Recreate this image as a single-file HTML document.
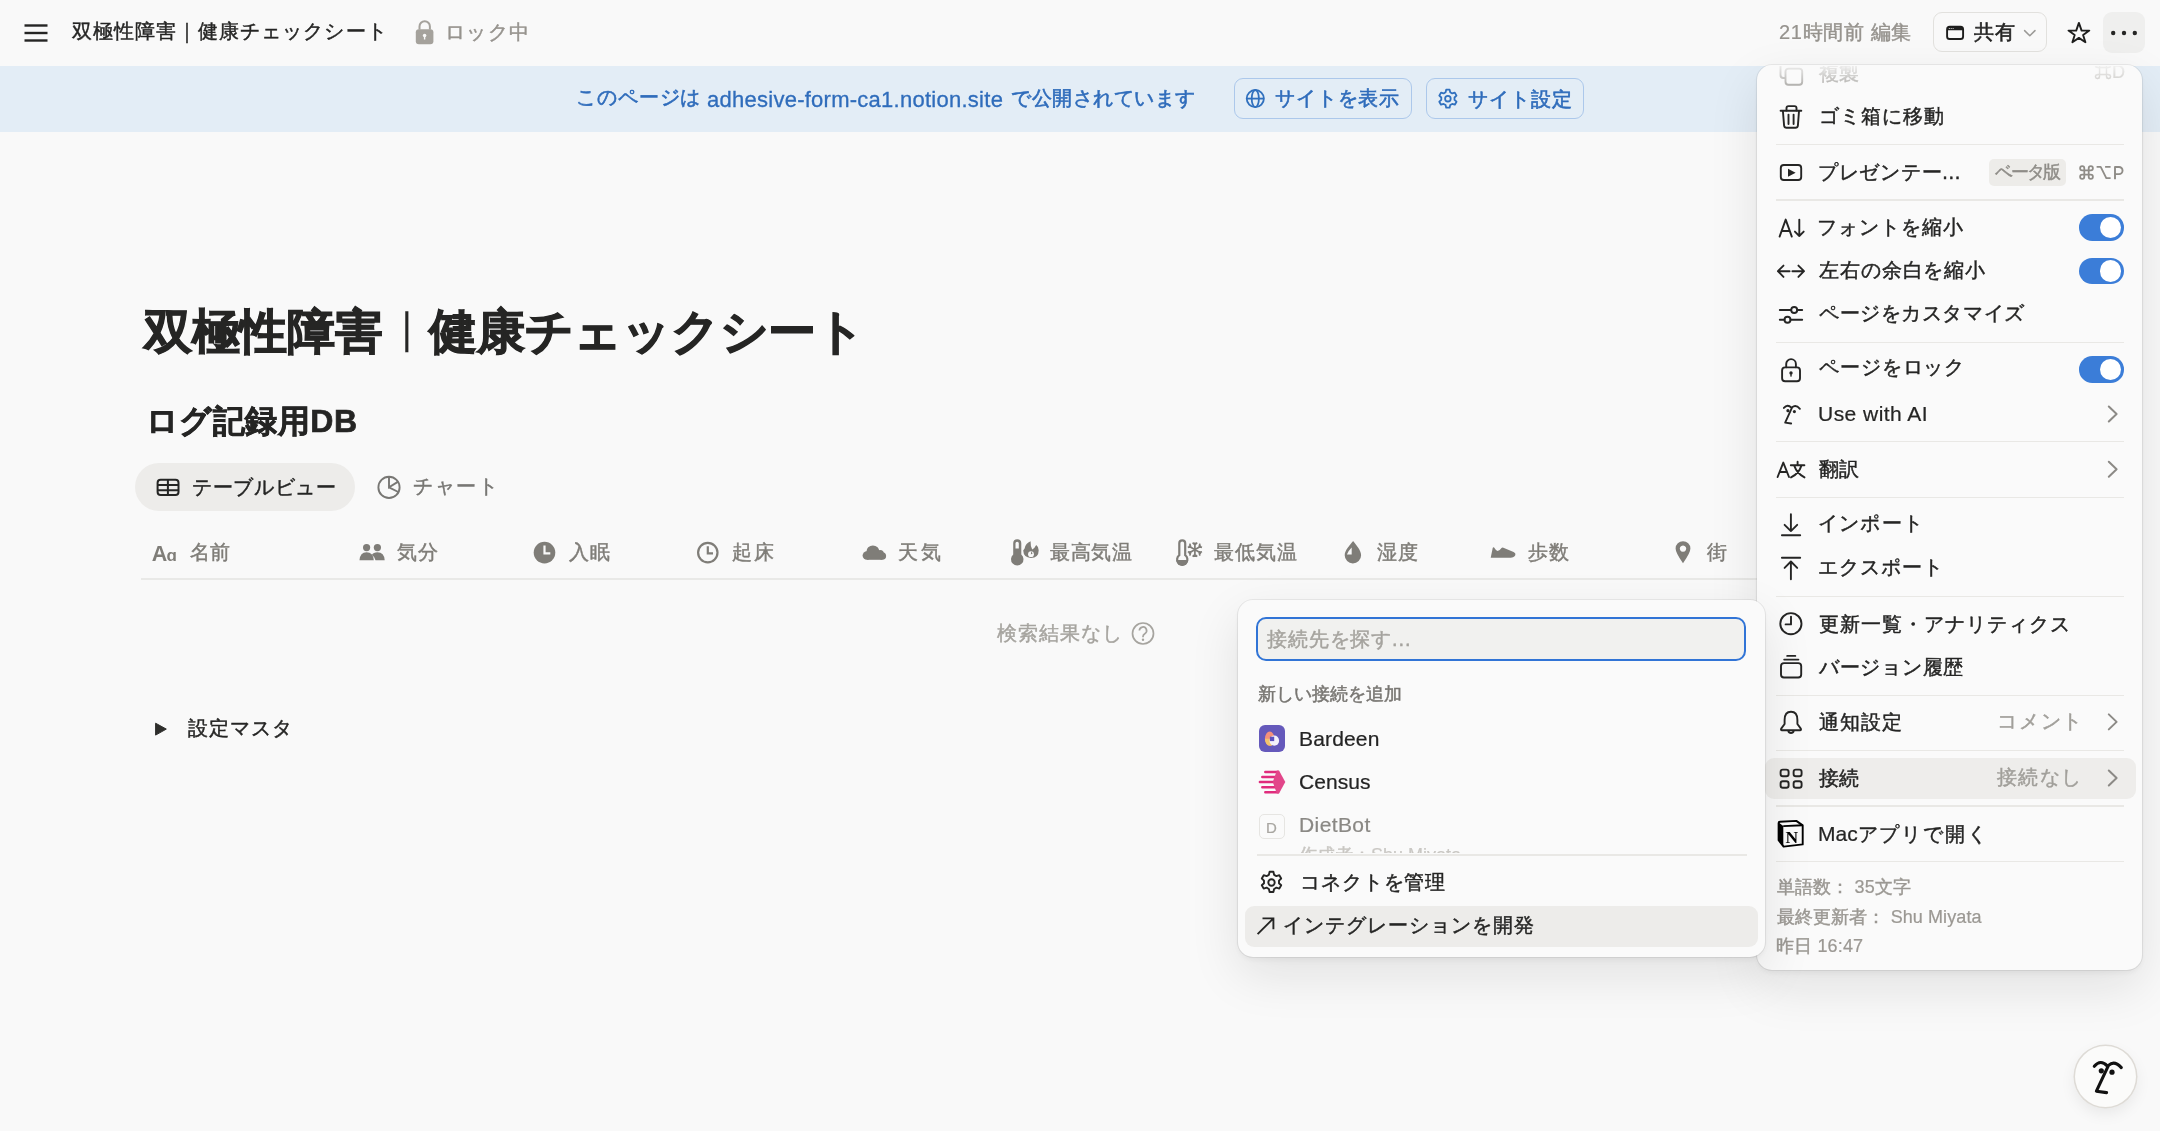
<!DOCTYPE html>
<html lang="ja">
<head>
<meta charset="utf-8">
<style>
html,body{margin:0;padding:0;}
body{width:2160px;height:1131px;overflow:hidden;position:relative;background:#F9F9F9;font-family:"Liberation Sans",sans-serif;color:#252524;}
.t{position:absolute;white-space:nowrap;line-height:1;will-change:transform;-webkit-text-stroke:0.45px currentColor;}
.abs{position:absolute;}
svg{position:absolute;overflow:visible;}
.g{color:#96938E;}
.tg{position:absolute;left:2078.7px;width:45.2px;height:26.5px;border-radius:13.25px;background:#3B7DD8;}
.tg::after{content:"";position:absolute;right:2.4px;top:2.4px;width:21.7px;height:21.7px;border-radius:50%;background:#fff;}
.bn{color:#2F6CBB;-webkit-text-stroke:0.6px currentColor;}
.l{-webkit-text-stroke:0.22px currentColor;}
.sep{position:absolute;left:1776px;width:348px;height:1.5px;background:#E9E8E5;}
</style>
</head>
<body>
<!-- TOP BAR -->
<svg style="left:0;top:0" width="60" height="60"><g stroke="#252524" stroke-width="2.4" stroke-linecap="butt"><line x1="24.5" y1="25.5" x2="47.5" y2="25.5"/><line x1="24.5" y1="33" x2="47.5" y2="33"/><line x1="24.5" y1="40.5" x2="47.5" y2="40.5"/></g></svg>
<div class="t" style="left:72.4px;top:21.1px;font-size:20px;letter-spacing:1.04px;">双極性障害｜健康チェックシート</div>
<svg style="left:0;top:0" width="1" height="1"><g fill="#A5A29C"><path d="M419.5 29.5 v-3 a5.2 5.2 0 0 1 10.4 0 v3" fill="none" stroke="#A5A29C" stroke-width="2"/><rect x="415.8" y="29.3" width="17.6" height="15" rx="3"/></g><circle cx="424.6" cy="35.5" r="1.8" fill="#F9F9F8"/><rect x="423.9" y="35.5" width="1.4" height="4" fill="#F9F9F8"/></svg>
<div class="t g" style="left:445.2px;top:22.1px;font-size:20px;letter-spacing:1.26px;">ロック中</div>

<div class="t g" style="left:1778.6px;top:21.6px;font-size:20px;letter-spacing:0.65px;"><span class="l">21</span>時間前 編集</div>
<div class="abs" style="left:1933.4px;top:12.2px;width:111.6px;height:38.2px;border:1.5px solid #E2E1DE;border-radius:9px;"></div>
<div class="t" style="left:1974.0px;top:21.6px;font-size:20px;-webkit-text-stroke:0.6px currentColor;letter-spacing:1.10px;">共有</div>
<div class="abs" style="left:2103px;top:12px;width:42px;height:41px;background:#EFEFEE;border-radius:9px;"></div>

<!-- BANNER -->
<div class="abs" style="left:0;top:66px;width:2160px;height:66px;background:#E3EDF6;"></div>
<div class="t bn" style="left:576.2px;top:87.1px;font-size:20px;letter-spacing:0.88px;">このページは</div>
<div class="t bn" style="left:706.8px;top:89px;font-size:22px;letter-spacing:0.26px;-webkit-text-stroke:0.3px currentColor;">adhesive-form-ca1.notion.site</div>
<div class="t bn" style="left:1011.4px;top:88.0px;font-size:20px;letter-spacing:0.54px;">で公開されています</div>
<div class="abs" style="left:1233.5px;top:78px;width:176px;height:39px;border:1.5px solid #ACC8EB;border-radius:9px;"></div>
<div class="t" style="left:1274.6px;top:88.0px;font-size:20px;color:#2F6CBB;-webkit-text-stroke:0.6px currentColor;letter-spacing:0.84px;">サイトを表示</div>
<div class="abs" style="left:1425.5px;top:78px;width:156px;height:39px;border:1.5px solid #ACC8EB;border-radius:9px;"></div>
<div class="t" style="left:1467.6px;top:88.5px;font-size:20px;color:#2F6CBB;-webkit-text-stroke:0.6px currentColor;letter-spacing:1.00px;">サイト設定</div>

<svg style="left:0;top:0" width="1" height="1">
<g fill="none" stroke="#1E1E1D" stroke-width="1.9"><rect x="1947.1" y="26.8" width="16.0" height="12.2" rx="2.6"/></g>
<path d="M1947.1 30.2 V29.4 a2.6 2.6 0 0 1 2.6 -2.6 h10.8 a2.6 2.6 0 0 1 2.6 2.6 V30.2 Z" fill="#1E1E1D"/><g fill="#F9F9F9"><circle cx="1949.3" cy="28.5" r="0.55"/><circle cx="1951.2" cy="28.5" r="0.55"/><circle cx="1953.1" cy="28.5" r="0.55"/></g>
<path d="M2024.6 30.6 L2029.8 35.8 L2035 30.6" fill="none" stroke="#9B9A97" stroke-width="1.5" stroke-linecap="round" stroke-linejoin="round"/>
<path d="M2078.9 22.9 L2081.6 30.6 L2089.3 30.6 L2083.1 35 L2085.4 42.2 L2078.9 37.9 L2072.4 42.2 L2074.7 35 L2068.5 30.6 L2076.2 30.6 Z" fill="none" stroke="#1E1E1D" stroke-width="1.9" stroke-linejoin="round"/>
<g fill="#252524"><circle cx="2113.2" cy="33" r="2.2"/><circle cx="2124" cy="33" r="2.2"/><circle cx="2134.8" cy="33" r="2.2"/></g>
<g fill="none" stroke="#3070BE" stroke-width="1.8"><circle cx="1255.3" cy="98.6" r="8.6"/><ellipse cx="1255.3" cy="98.6" rx="3.6" ry="8.6"/><path d="M1246.7 98.6 H1263.9"/></g>
<g fill="none" stroke="#3070BE" stroke-width="1.8" stroke-linejoin="round"><path d="M1446.2 89.6 h3.4 l0.6 2.6 l2 1.2 l2.6 -0.8 l1.7 3 l-2 1.9 v2.3 l2 1.9 l-1.7 3 l-2.6 -0.8 l-2 1.2 l-0.6 2.6 h-3.4 l-0.6 -2.6 l-2 -1.2 l-2.6 0.8 l-1.7 -3 l2 -1.9 v-2.3 l-2 -1.9 l1.7 -3 l2.6 0.8 l2 -1.2 Z"/><circle cx="1447.9" cy="98.7" r="2.8"/></g>
</svg>
<!-- PAGE -->
<div class="t" style="left:143.6px;top:307.9px;font-size:48px;font-weight:bold;-webkit-text-stroke:1.1px currentColor;letter-spacing:-0.29px;">双極性障害<span style="display:inline-block;font-weight:normal;-webkit-text-stroke:0.2px currentColor;transform:scaleY(0.86);transform-origin:50% 0;">｜</span>健康チェックシート</div>
<div class="t" style="left:145.8px;top:405.2px;font-size:32px;font-weight:bold;-webkit-text-stroke:0.7px currentColor;letter-spacing:0.47px;">ログ記録用DB</div>
<div class="abs" style="left:135px;top:463px;width:220px;height:48px;background:#EDECEA;border-radius:24px;"></div>
<div class="t" style="left:192.2px;top:477.1px;font-size:20px;letter-spacing:0.63px;">テーブルビュー</div>
<div class="t" style="left:413.4px;top:476.2px;font-size:20px;color:#787774;letter-spacing:1.73px;">チャート</div>

<svg style="left:0;top:0" width="1" height="1">
<g fill="none" stroke="#252524" stroke-width="2"><rect x="157.6" y="479.7" width="20.9" height="15.2" rx="3"/><path d="M157.6 485 H178.5 M157.6 490.2 H178.5 M167.9 479.7 V494.9"/></g>
<g fill="none" stroke="#787774" stroke-width="1.9"><circle cx="389" cy="487.4" r="10.6"/><path d="M389 476.8 V487.4 L398.2 481.6 M389 487.4 L398.3 492"/></g>
</svg>
<div class="abs" style="left:141px;top:578px;width:1620px;height:1.5px;background:#E9E9E7;"></div>
<div class="t" style="left:190.0px;top:541.5px;font-size:20px;color:#7F7D78;letter-spacing:-0.20px;">名前</div>
<div class="t" style="left:397.1px;top:541.5px;font-size:20px;color:#7F7D78;letter-spacing:1.40px;">気分</div>
<div class="t" style="left:569.0px;top:542.4px;font-size:20px;color:#7F7D78;letter-spacing:1.20px;">入眠</div>
<div class="t" style="left:732.0px;top:542.4px;font-size:20px;color:#7F7D78;letter-spacing:1.80px;">起床</div>
<div class="t" style="left:897.5px;top:541.5px;font-size:20px;color:#7F7D78;letter-spacing:3.00px;">天気</div>
<div class="t" style="left:1050.0px;top:542.4px;font-size:20px;color:#7F7D78;letter-spacing:0.59px;">最高気温</div>
<div class="t" style="left:1214.0px;top:541.5px;font-size:20px;color:#7F7D78;letter-spacing:0.94px;">最低気温</div>
<div class="t" style="left:1377.0px;top:542.4px;font-size:20px;color:#7F7D78;letter-spacing:1.00px;">湿度</div>
<div class="t" style="left:1527.5px;top:541.5px;font-size:20px;color:#7F7D78;letter-spacing:1.20px;">歩数</div>
<div class="t" style="left:1707.0px;top:541.5px;font-size:20px;color:#7F7D78;letter-spacing:0.20px;">街</div>
<svg style="left:0;top:0" width="1" height="1">
<g fill="#7F7D78">
<text x="151.8" y="560.8" font-family="Liberation Sans" font-weight="bold" font-size="21.5" fill="#7F7D78">A</text><text x="166.4" y="560.8" font-family="Liberation Sans" font-weight="bold" font-size="17" fill="#7F7D78">ɑ</text>
<circle cx="366.6" cy="547.6" r="3.6"/><circle cx="377.4" cy="547.6" r="3.6"/>
<path d="M359.5 560.2 Q360 552.2 366.6 552.2 Q373.2 552.2 373.8 560.2 Z"/><path d="M371.8 555 Q373.5 552.2 377.4 552.2 Q384.2 552.2 384.7 560.2 H375.5 Q375.2 557 371.8 555 Z"/>
<circle cx="544.5" cy="552.6" r="10.8"/>
<circle cx="872.9" cy="552" r="6.6"/><circle cx="866.9" cy="555.5" r="4.3"/><circle cx="880.2" cy="553.6" r="3.6"/><circle cx="882.3" cy="556" r="3.8"/><rect x="866.9" y="552" width="15.4" height="7.8"/>
<path fill-rule="evenodd" d="M1013.2 543.3 a4.05 4.05 0 0 1 8.1 0 V554.5 a6.25 6.25 0 1 1 -8.1 0 Z M1015.5 543.3 a1.65 1.65 0 0 1 3.3 0 V548.6 H1015.5 Z"/>
<path d="M1030.6 541.3 Q1025.6 543.2 1024.6 548.4 L1023.2 550.6 Q1023.6 557.9 1030.9 557.9 Q1038.7 557.9 1038.7 550.2 Q1038.7 546.6 1036.2 544.9 Q1034.6 548.3 1032.2 549.4 Q1030.4 546.6 1030.6 541.3 Z"/>
<path d="M1353.1 541.1 C1350 545 1344.7 550.5 1344.7 555.2 A8.2 8.2 0 0 0 1361.1 555.2 C1361.1 550.5 1356.2 545 1353.1 541.1 Z"/>
<path d="M1490.7 557.8 L1492.7 547.9 Q1493.2 546.7 1494.1 547.6 Q1496 550.9 1497.6 550.9 Q1499.6 550.9 1501.5 548 Q1502.3 547.1 1503.4 547.7 L1513.6 552.1 Q1515.9 553 1515.4 554.9 Q1514.4 557.8 1508 557.8 Z"/>
<path d="M1683 541.2 a7.4 7.4 0 0 1 7.4 7.4 Q1690.4 553 1683 563.2 Q1675.6 553 1675.6 548.6 a7.4 7.4 0 0 1 7.4 -7.4 Z M1683 545.4 a3.2 3.2 0 1 0 0.01 0 Z" fill-rule="evenodd"/>
</g>
<g fill="none" stroke="#F9F9F8" stroke-width="2.2"><path d="M544.5 545.5 V553.3 H550.3"/></g>
<g fill="none" stroke="#7F7D78" stroke-width="2.2"><circle cx="707.8" cy="552.6" r="9.7"/><path d="M707.8 546.3 V553.3 H713"/></g>
<g fill="#F9F9F9"><path d="M1351.7 547.4 V554.6 H1346.9 Q1347.9 551 1351.7 547.4 Z"/></g>
<circle cx="1031" cy="554.2" r="2.9" fill="#F9F9F9"/><path d="M1031.3 551.2 L1032.6 553.6 L1030.8 554.4 Z" fill="#7F7D78"/>
<g fill="none" stroke="#7F7D78" stroke-width="2.2"><path d="M1179.3 543.3 a2.95 2.95 0 0 1 5.9 0 V555.2 a5.15 5.15 0 1 1 -5.9 0 Z"/>
<path d="M1194.9 542.4 V556.9 M1188.6 545.9 L1201.2 553.3 M1188.6 553.3 L1201.2 545.9 M1192.6 542.6 L1194.9 544.8 L1197.2 542.6 M1192.6 556.7 L1194.9 554.5 L1197.2 556.7 M1189.8 543.6 L1190.6 546.6 L1187.8 547.4 M1199.9 555.6 L1199.2 552.6 L1202 551.8 M1187.8 551.8 L1190.6 552.6 L1189.8 555.6 M1202 547.4 L1199.2 546.6 L1199.9 543.6" stroke-width="1.7"/></g>
<g fill="#7F7D78"><path d="M1176.2 560.1 H1188.2 a6 6 0 0 1 -12 0 Z"/></g>
</svg>

<div class="t" style="left:996.8px;top:622.5px;font-size:20px;color:#A6A49F;letter-spacing:1.04px;">検索結果なし</div>
<div class="t" style="left:187.6px;top:718.4px;font-size:20px;letter-spacing:0.97px;">設定マスタ</div>
<svg style="left:0;top:0" width="1" height="1"><g fill="none" stroke="#A6A49F" stroke-width="1.7"><circle cx="1143" cy="633.5" r="10.5"/><path d="M1139.4 630.6 a3.6 3.6 0 1 1 5.4 3.1 q-1.8 1 -1.8 2.9 v0.7"/></g><circle cx="1143" cy="639.8" r="1.2" fill="#A6A49F"/>
<path d="M155.6 723.2 L166.3 729.1 L155.6 735.1 Z" fill="#2E2E2C" stroke="#2E2E2C" stroke-width="1" stroke-linejoin="round"/></svg>

<!-- RIGHT MENU -->
<div class="abs" style="left:1757px;top:65px;width:385px;height:905px;background:#FAFAFA;border-radius:15px;box-shadow:0 0 0 1px rgba(15,15,15,0.07),0 3px 6px rgba(15,15,15,0.05),0 18px 50px rgba(15,15,15,0.10);"></div>
<div class="abs" style="left:1757px;top:66px;width:385px;height:24px;overflow:hidden;-webkit-mask-image:linear-gradient(to bottom, rgba(0,0,0,0.15) 0%, rgba(0,0,0,0.9) 100%);">
<div class="t" style="left:62px;top:-3.5px;font-size:20px;color:#9B9995;">複製</div>
<div class="t" style="left:337px;top:-3px;font-size:18px;color:#B9B7B3;">⌘<span class="l">D</span></div>
<svg style="left:0;top:0" width="1" height="1"><g fill="none" stroke="#9B9995" stroke-width="1.9"><rect x="28.5" y="2.6" width="16.7" height="16.1" rx="3"/><path d="M23.5 -6 V9 a3 3 0 0 0 3 3 H28"/></g></svg>
</div>
<div class="abs" style="left:1764.5px;top:757.7px;width:371.3px;height:41px;background:#EEEDEB;border-radius:9px;"></div>
<svg style="left:0;top:0" width="1" height="1"><g fill="none" stroke="#252524" stroke-width="1.9" stroke-linecap="round" stroke-linejoin="round">
<path d="M1786.5 110.5 v-2.4 a2 2 0 0 1 2-2 h6 a2 2 0 0 1 2 2 v2.4"/>
<path d="M1780.6 110.8 H1801.3"/>
<path d="M1782.9 111 L1784.1 125.6 a2.5 2.5 0 0 0 2.5 2.2 h8.8 a2.5 2.5 0 0 0 2.5-2.2 L1799 111"/>
<path d="M1788.5 114.6 V124.1 M1793.6 114.6 V124.1"/>
<rect x="1780.8" y="165" width="20.4" height="15" rx="3"/>
<path d="M1779.6 236.6 L1785.7 219.6 L1791.8 236.6 M1781.8 231 H1789.6"/>
<path d="M1799.3 219.6 V236 M1794.9 231.6 L1799.3 236 L1803.7 231.6"/>
<path d="M1789.6 271.2 H1777.9 M1783.5 265.6 L1777.9 271.2 L1783.5 276.9 M1792.4 271.2 H1804 M1798.4 265.6 L1804 271.2 L1798.4 276.9"/>
<path d="M1779.8 310 H1791.2 M1797.2 310 H1802.2 M1779.8 319.7 H1784.5 M1790.5 319.7 H1802.2"/>
<circle cx="1794.2" cy="310" r="3"/><circle cx="1787.5" cy="319.7" r="3"/>
<path d="M1786.2 367.3 V364 a4.85 4.85 0 0 1 9.7 0 V367.3"/>
<rect x="1782.1" y="367.4" width="17.9" height="13.8" rx="3"/>
<path d="M1777.6 477 L1783.3 462.6 L1789 477 M1779.6 472 H1787"/>
<path d="M1797.6 461.8 V464.6 M1790.8 465.2 H1804.4 M1801.4 465.6 Q1799 473.5 1791 477.4 M1794.2 465.6 Q1797 473.5 1804.5 477.4"/>
<path d="M1790.9 514.2 V531 M1784.6 524.8 L1790.9 531.1 L1797.2 524.8 M1781.9 535.3 H1800.2"/>
<path d="M1781.9 557.8 H1800.2 M1790.9 579.3 V561.6 M1784.6 567.9 L1790.9 561.5 L1797.2 567.9"/>
<circle cx="1790.9" cy="623.7" r="10.6"/><path d="M1791 616.6 V624.4 H1785.6"/>
<path d="M1787.2 655.9 H1795.3 M1784.2 659.6 H1798.4"/>
<rect x="1781" y="663.1" width="20.2" height="14.4" rx="3"/>
<path d="M1791 711.8 C1786.2 711.8 1784.6 716 1784.6 720 V724 L1781.2 728.6 Q1780.5 730.2 1782 730.2 H1800 Q1801.5 730.2 1800.8 728.6 L1797.4 724 V720 C1797.4 716 1795.8 711.8 1791 711.8 Z M1788.3 730.9 A2.8 2.8 0 0 0 1793.7 730.9"/>
<rect x="1780.6" y="769.6" width="8" height="6.6" rx="2.3"/><rect x="1793.6" y="769.6" width="8" height="6.6" rx="2.3"/>
<rect x="1780.6" y="781.2" width="8" height="6.6" rx="2.3"/><rect x="1793.6" y="781.2" width="8" height="6.6" rx="2.3"/>
</g>
<g fill="#252524"><path d="M1788 168.8 L1795.6 172.8 L1788 176.8 Z"/><circle cx="1791" cy="372.9" r="1.7"/><rect x="1790.3" y="373" width="1.4" height="3.6"/></g>
<g transform="translate(1783.6 404.8) scale(0.6)" fill="none" stroke="#252524" stroke-width="3.1" stroke-linecap="round" stroke-linejoin="round">
<path d="M0.5 5.2 Q6.5 -2 13 4.8"/><path d="M27.2 6.8 Q20.5 -1 14.2 4.2 L2.6 29.8 L12.6 31.2"/>
</g>
<g transform="translate(1783.6 404.8) scale(0.6)" fill="#252524"><circle cx="7.2" cy="9.8" r="2.6"/><circle cx="18" cy="11.3" r="2.6"/></g>
<path d="M1778.6 822.9 Q1778.6 821.8 1780 821.7 L1796.3 820.9 L1802.7 825.4 V844.4 L1783.6 846.6 L1778.6 840.2 Z" fill="#FAFAFA" stroke="#000" stroke-width="1.9" stroke-linejoin="round"/>
<path d="M1778.6 822.6 L1783.3 826 V846.4 L1778.6 840.2 Z" fill="#000"/>
<path d="M1783.2 826.1 L1802.6 825.3" stroke="#000" stroke-width="1.9" fill="none"/>
<text x="1785.6" y="842.6" font-family="Liberation Serif" font-weight="bold" font-size="17.5" fill="#000">N</text>
</svg>
<div class="t" style="left:1818.6px;top:106.2px;font-size:20px;letter-spacing:1.08px;">ゴミ箱に移動</div>
<div class="t" style="left:1818.4px;top:161.6px;font-size:20px;letter-spacing:0.71px;">プレゼンテー...</div>
<div class="abs" style="left:1989px;top:159px;width:77px;height:27px;background:#EDECE9;border-radius:5px;"></div>
<div class="t" style="left:1995.4px;top:163.1px;font-size:18px;color:#8F8D88;letter-spacing:-1.87px;">ベータ版</div>
<svg style="left:0;top:0" width="1" height="1"><g fill="none" stroke="#8F8C87" stroke-width="1.8" stroke-linejoin="round">
<path d="M2084.3 170.3 V174.8 M2088.7 170.3 V174.8 M2084.3 170.4 H2088.7 M2084.3 174.7 H2088.7"/>
<path d="M2084.3 170.4 V168.3 A2.1 2.1 0 1 0 2082.2 170.4 H2084.3 M2088.7 170.4 V168.3 A2.1 2.1 0 1 1 2090.8 170.4 H2088.7 M2084.3 174.7 V176.8 A2.1 2.1 0 1 1 2082.2 174.7 H2084.3 M2088.7 174.7 V176.8 A2.1 2.1 0 1 0 2090.8 174.7 H2088.7"/>
<path d="M2096.6 166.9 H2100.7 L2106.3 178.1 H2110.6 M2105.1 166.9 H2110.6"/>
<path d="M2115 179.2 V167 H2119 a3.55 3.55 0 0 1 0 7.1 H2115" stroke-width="1.9"/>
</g></svg>
<div class="t" style="left:1817.4px;top:217.1px;font-size:20px;letter-spacing:0.94px;">フォントを縮小</div>
<div class="tg" style="top:214.2px;"></div>
<div class="t" style="left:1819.0px;top:259.9px;font-size:20px;letter-spacing:0.88px;">左右の余白を縮小</div>
<div class="tg" style="top:257.6px;"></div>
<div class="t" style="left:1819.4px;top:302.9px;font-size:20px;letter-spacing:0.58px;">ページをカスタマイズ</div>
<div class="t" style="left:1819.4px;top:357.1px;font-size:20px;letter-spacing:0.89px;">ページをロック</div>
<div class="tg" style="top:356.2px;"></div>
<div class="t" style="left:1817.8px;top:403.1px;font-size:21px;letter-spacing:0.46px;"><span class="l">Use with AI</span></div>
<svg style="left:0;top:0" width="1" height="1"><path d="M2108.8 406.5 L2116.6 414.0 L2108.8 421.5" fill="none" stroke="#8C8A86" stroke-width="2" stroke-linecap="round" stroke-linejoin="round"/></svg>
<div class="t" style="left:1818.8px;top:459.0px;font-size:20px;letter-spacing:0.20px;">翻訳</div>
<svg style="left:0;top:0" width="1" height="1"><path d="M2108.8 461.8 L2116.6 469.3 L2108.8 476.8" fill="none" stroke="#8C8A86" stroke-width="2" stroke-linecap="round" stroke-linejoin="round"/></svg>
<div class="t" style="left:1818.4px;top:513.3px;font-size:20px;letter-spacing:1.20px;">インポート</div>
<div class="t" style="left:1818.4px;top:557.3px;font-size:20px;letter-spacing:1.08px;">エクスポート</div>
<div class="t" style="left:1819.0px;top:613.5px;font-size:20px;letter-spacing:0.97px;">更新一覧・アナリティクス</div>
<div class="t" style="left:1819.0px;top:656.6px;font-size:20px;letter-spacing:0.74px;">バージョン履歴</div>
<div class="t" style="left:1819.0px;top:711.5px;font-size:20px;letter-spacing:1.07px;">通知設定</div>
<svg style="left:0;top:0" width="1" height="1"><path d="M2108.8 714.4 L2116.6 721.9 L2108.8 729.4" fill="none" stroke="#8C8A86" stroke-width="2" stroke-linecap="round" stroke-linejoin="round"/></svg>
<div class="t" style="right:76.2px;top:710.5px;font-size:20px;color:#A19F9A;letter-spacing:1.80px;">コメント</div>
<div class="t" style="left:1819.0px;top:767.6px;font-size:20px;letter-spacing:0.40px;">接続</div>
<svg style="left:0;top:0" width="1" height="1"><path d="M2108.8 770.5 L2116.6 778.0 L2108.8 785.5" fill="none" stroke="#8C8A86" stroke-width="2" stroke-linecap="round" stroke-linejoin="round"/></svg>
<div class="t" style="right:77.6px;top:767.0px;font-size:20px;color:#A19F9A;letter-spacing:1.40px;">接続なし</div>
<div class="t" style="left:1818.0px;top:822.9px;font-size:20px;letter-spacing:1.8px;"><span class="l" style="font-size:21px;letter-spacing:0;">Mac</span>アプリで開く</div>
<div class="sep" style="top:143.7px;"></div>
<div class="sep" style="top:199.3px;"></div>
<div class="sep" style="top:341.9px;"></div>
<div class="sep" style="top:440.8px;"></div>
<div class="sep" style="top:496.6px;"></div>
<div class="sep" style="top:595.5px;"></div>
<div class="sep" style="top:694.5px;"></div>
<div class="sep" style="top:749.5px;"></div>
<div class="sep" style="top:805.1px;"></div>
<div class="sep" style="top:860.6px;"></div>
<div class="t" style="left:1776.8px;top:877.8px;font-size:18px;color:#9B9893;letter-spacing:0.10px;">単語数： <span class="l">35</span>文字</div>
<div class="t" style="left:1776.8px;top:907.8px;font-size:18px;color:#9B9893;letter-spacing:0.09px;">最終更新者： <span class="l">Shu Miyata</span></div>
<div class="t" style="left:1775.8px;top:937.0px;font-size:18px;color:#9B9893;letter-spacing:0.15px;">昨日 <span class="l">16:47</span></div>

<!-- POPUP -->
<div class="abs" style="left:1238px;top:599.5px;width:527px;height:357px;background:#FAFAFA;border-radius:15px;box-shadow:0 0 0 1px rgba(15,15,15,0.07),0 3px 6px rgba(15,15,15,0.05),0 18px 50px rgba(15,15,15,0.10);"></div>
<div class="abs" style="left:1256px;top:617px;width:486px;height:40px;background:#F1F1EF;border:2.5px solid #3174D6;border-radius:10px;"></div>
<div class="t" style="left:1266.6px;top:629.0px;font-size:20px;color:#A5A39E;letter-spacing:0.85px;">接続先を探す...</div>
<div class="t" style="left:1257.6px;top:685.1px;font-size:18px;color:#787672;-webkit-text-stroke:0.5px currentColor;letter-spacing:-0.05px;">新しい接続を追加</div>
<div class="abs" style="left:1258.7px;top:725.3px;width:26.8px;height:26.9px;background:#6559BB;border-radius:6px;"></div>
<svg style="left:0;top:0" width="1" height="1">
<ellipse cx="1269.7" cy="738.7" rx="4.8" ry="7.1" fill="#F4917B"/>
<path d="M1264.9 738.7 A4.8 7.1 0 0 0 1269.7 745.8 L1272 745.8 L1269.5 738.7 Z" fill="#F2C36C"/>
<ellipse cx="1274.3" cy="740.7" rx="4.8" ry="5.1" fill="#F3F2FA"/>
<rect x="1269.9" y="736.7" width="4.3" height="4.4" fill="#5C50BE"/>
<g stroke="#E02C7D" stroke-width="2.5" stroke-linecap="round"><path d="M1265.3 771.9 H1278 M1262.3 777 H1276 M1259.9 782.1 H1274 M1262.3 787.2 H1276 M1265.3 792.3 H1278"/></g>
<path d="M1276.8 770.6 H1279 L1285.3 782.1 L1279 793.6 H1276.8 L1272.8 782.1 Z" fill="#E2468A"/>
</svg>
<div class="t" style="left:1298.5px;top:727.6px;font-size:21px;color:#242424;letter-spacing:0.16px;"><span class="l">Bardeen</span></div>
<div class="t" style="left:1298.5px;top:771.2px;font-size:21px;color:#242424;letter-spacing:0.08px;"><span class="l">Census</span></div>
<div class="abs" style="left:1258.7px;top:814px;width:24.3px;height:23px;border:1.4px solid #E6E5E2;border-radius:5px;"></div>
<div class="t" style="left:1266px;top:819.5px;font-size:15px;color:#A8A6A1;"><span class="l">D</span></div>
<div class="t" style="left:1298.5px;top:813.6px;font-size:21px;color:#8A8884;letter-spacing:0.40px;"><span class="l">DietBot</span></div>
<div class="abs" style="left:1295px;top:840px;width:300px;height:13px;overflow:hidden;"><div class="t" style="left:4px;top:6px;font-size:18px;color:#C9C7C3;">作成者：<span class="l">Shu Miyata</span></div></div>
<div class="abs" style="left:1257px;top:854.2px;width:490px;height:1.5px;background:#E9E8E5;"></div>
<svg style="left:0;top:0" width="1" height="1"><g fill="none" stroke="#252524" stroke-width="1.9" stroke-linejoin="round">
<path id="gear" d="M1269.6 871.8 h3.8 l0.7 3 l2.3 1.3 l2.9 -0.9 l1.9 3.3 l-2.2 2.1 v2.6 l2.2 2.1 l-1.9 3.3 l-2.9 -0.9 l-2.3 1.3 l-0.7 3 h-3.8 l-0.7 -3 l-2.3 -1.3 l-2.9 0.9 l-1.9 -3.3 l2.2 -2.1 v-2.6 l-2.2 -2.1 l1.9 -3.3 l2.9 0.9 l2.3 -1.3 Z"/>
<circle cx="1271.5" cy="882.5" r="3.2"/></g></svg>
<div class="t" style="left:1299.7px;top:871.8px;font-size:20px;letter-spacing:0.88px;">コネクトを管理</div>
<div class="abs" style="left:1245px;top:905.7px;width:513px;height:41.1px;background:#EDECEA;border-radius:9px;"></div>
<svg style="left:0;top:0" width="1" height="1"><path d="M1257.6 934.2 L1273.4 918.4 M1262.5 918.4 H1273.4 V929.3" fill="none" stroke="#252524" stroke-width="1.9"/></svg>
<div class="t" style="left:1282.5px;top:915.2px;font-size:20px;letter-spacing:1.03px;">インテグレーションを開発</div>

<!-- AI button -->
<div class="abs" style="left:2075px;top:1046px;width:61px;height:61px;background:#FBFBFA;border-radius:50%;box-shadow:0 0 0 1.5px #DEDBD6,0 6px 16px rgba(0,0,0,0.08);"></div>
<svg style="left:0;top:0" width="1" height="1"><g fill="none" stroke="#111" stroke-width="3.1" stroke-linecap="round" stroke-linejoin="round"><path d="M2094.3 1066.3 Q2100.5 1059 2107.2 1065.8"/><path d="M2121.3 1067.6 Q2114.5 1060 2108.5 1065.3 L2096.4 1091.2 L2106.6 1092.6"/></g>
<g fill="#111"><circle cx="2101.3" cy="1070.8" r="2.6"/><circle cx="2112" cy="1072.2" r="2.6"/></g></svg>
</body>
</html>
